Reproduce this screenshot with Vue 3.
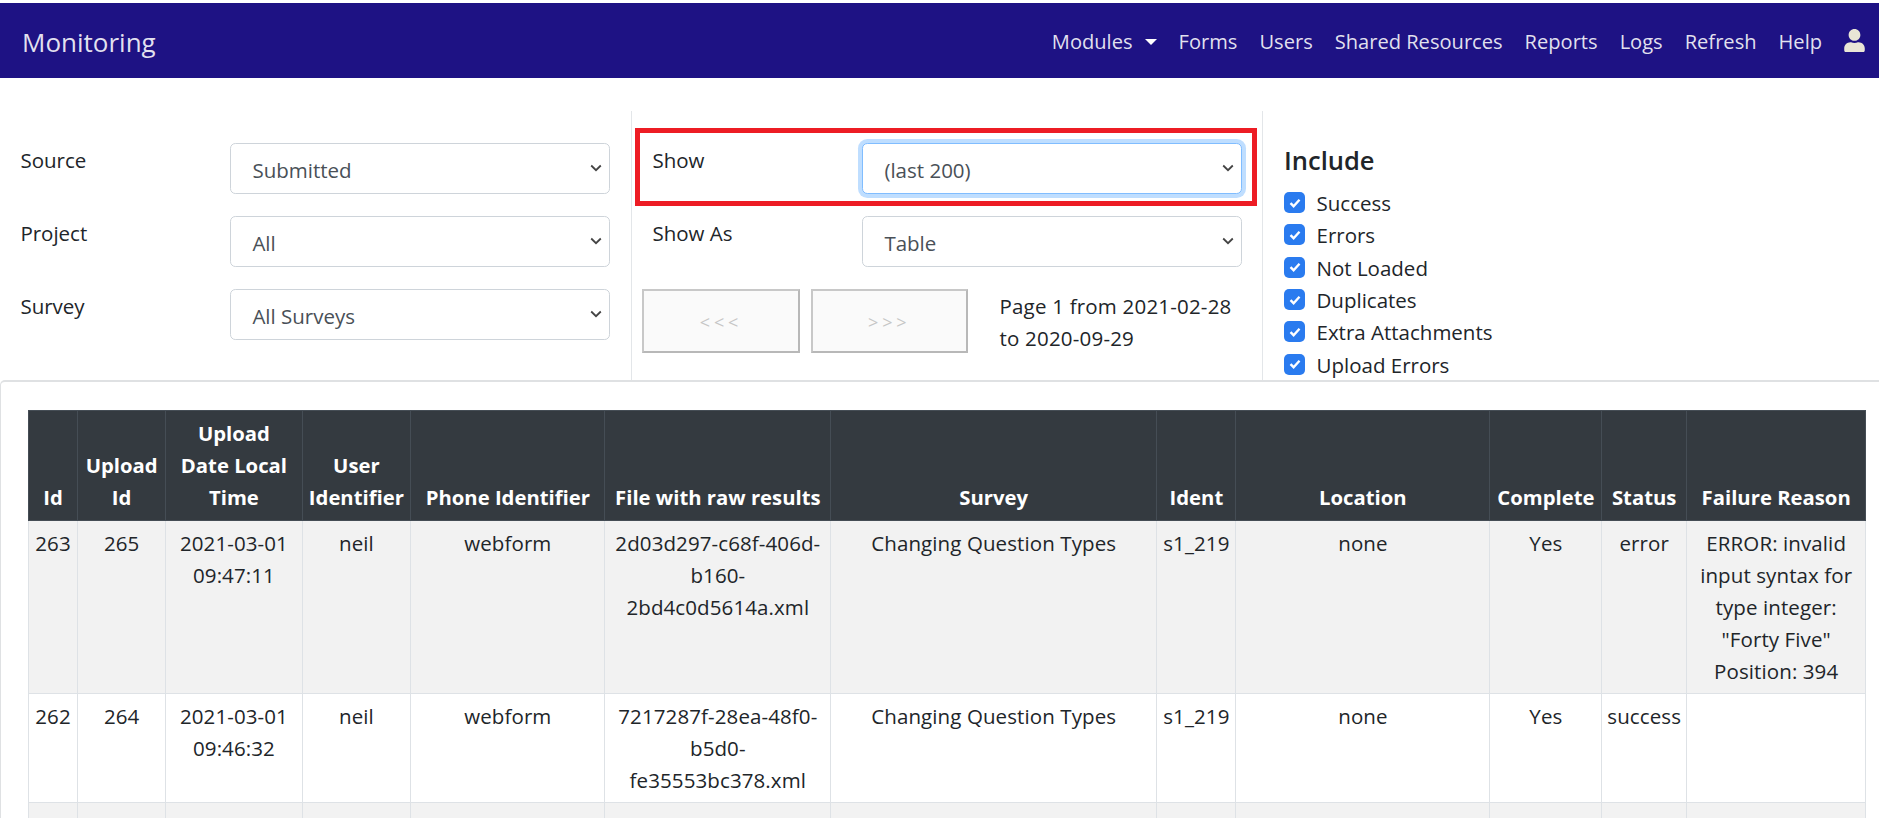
<template>
  <div class="page">
    <!-- Top bar -->
    <nav class="navbar">
      <span class="brand">Monitoring</span>
      <div class="nav-links">
        <a class="nav-link">Modules <i class="caret"></i></a>
        <a v-for="link in navLinks" :key="link" class="nav-link">{{ link }}</a>
        <a class="nav-link">
          <svg class="user-icon" viewBox="0 0 448 512" aria-hidden="true">
            <path d="M224 256c70.7 0 128-57.3 128-128S294.7 0 224 0 96 57.3 96 128s57.3 128 128 128zm89.6 32h-16.7c-22.2 10.2-46.9 16-72.9 16s-50.6-5.8-72.9-16h-16.7C60.2 288 0 348.2 0 422.4V464c0 26.5 21.5 48 48 48h352c26.5 0 48-21.5 48-48v-41.6c0-74.2-60.2-134.4-134.4-134.4z" />
          </svg>
        </a>
      </div>
    </nav>

    <!-- Filters -->
    <section class="filters">
      <div class="filter-col">
        <div v-for="f in leftFilters" :key="f.label" class="form-row">
          <label class="form-label">{{ f.label }}</label>
          <select class="form-select">
            <option>{{ f.value }}</option>
          </select>
        </div>
      </div>

      <div class="filter-col middle">
        <div class="form-row marked">
          <label class="form-label">Show</label>
          <select class="form-select focused">
            <option>(last 200)</option>
          </select>
          <span class="red-box"></span>
        </div>
        <div class="form-row">
          <label class="form-label">Show As</label>
          <select class="form-select">
            <option>Table</option>
          </select>
        </div>
        <div class="pager">
          <button class="page-btn" disabled>&lt;&lt;&lt;</button>
          <button class="page-btn narrow" disabled>&gt;&gt;&gt;</button>
          <div class="page-info">Page 1 from 2021-02-28<br />to 2020-09-29</div>
        </div>
      </div>

      <div class="filter-col last">
        <h5 class="include-title">Include</h5>
        <label v-for="c in includes" :key="c" class="check-row">
          <input type="checkbox" checked />
          <span>{{ c }}</span>
        </label>
      </div>
    </section>

    <!-- Results -->
    <section class="card">
      <table class="results">
        <colgroup>
          <col v-for="col in columns" :key="col.label" :style="{ width: col.width + 'px' }" />
        </colgroup>
        <thead>
          <tr>
            <th v-for="col in columns" :key="col.label">{{ col.label }}</th>
          </tr>
        </thead>
        <tbody>
          <tr v-for="(row, i) in rows" :key="i">
            <td v-for="(cell, j) in row" :key="j">{{ cell }}</td>
          </tr>
        </tbody>
      </table>
    </section>
  </div>
</template>

<script setup>
const navLinks = ['Forms', 'Users', 'Shared Resources', 'Reports', 'Logs', 'Refresh', 'Help']

const leftFilters = [
  { label: 'Source', value: 'Submitted' },
  { label: 'Project', value: 'All' },
  { label: 'Survey', value: 'All Surveys' },
]

const includes = ['Success', 'Errors', 'Not Loaded', 'Duplicates', 'Extra Attachments', 'Upload Errors']

const columns = [
  { label: 'Id', width: 49 },
  { label: 'Upload\nId', width: 88.3 },
  { label: 'Upload\nDate Local\nTime', width: 136.3 },
  { label: 'User\nIdentifier', width: 108.6 },
  { label: 'Phone Identifier', width: 194.3 },
  { label: 'File with raw results', width: 225.7 },
  { label: 'Survey', width: 326.1 },
  { label: 'Ident', width: 79.2 },
  { label: 'Location', width: 253.9 },
  { label: 'Complete', width: 112.1 },
  { label: 'Status', width: 84.5 },
  { label: 'Failure Reason', width: 179.5 },
]

const rows = [
  ['263', '265', '2021-03-01\n09:47:11', 'neil', 'webform', '2d03d297-c68f-406d-\nb160-\n2bd4c0d5614a.xml', 'Changing Question Types', 's1_219', 'none', 'Yes', 'error', 'ERROR: invalid\ninput syntax for\ntype integer:\n"Forty Five"\nPosition: 394'],
  ['262', '264', '2021-03-01\n09:46:32', 'neil', 'webform', '7217287f-28ea-48f0-\nb5d0-\nfe35553bc378.xml', 'Changing Question Types', 's1_219', 'none', 'Yes', 'success', ''],
  ['', '', '', 'neil', 'webform', '', 'Changing Question Types', 's1_219', 'none', 'Yes', '', ''],
]
</script>

<style>
html, body {
  margin: 0;
  background: #fff;
}
</style>

<style scoped>
.page {
  height: 818px;
  overflow: hidden;
  padding-top: 3px;
  box-sizing: border-box;
  font-family: "Open Sans", "Noto Sans", sans-serif;
  font-size: 20.5px;
  line-height: 32px;
  color: #212529;
  background: #fff;
}

/* top bar */
.navbar {
  display: flex;
  align-items: center;
  justify-content: space-between;
  height: 75px;
  padding: 2px 14px 0 22px;
  box-sizing: border-box;
  background: #1e1284;
  color: rgba(255, 255, 255, 0.88);
}
.brand {
  font-size: 26px;
}
.nav-links {
  display: flex;
  align-items: center;
  gap: 22px;
  font-size: 20.1px;
}
.nav-link {
  display: flex;
  align-items: center;
  gap: 12px;
}
.caret {
  width: 0;
  height: 0;
  border-left: 6.5px solid transparent;
  border-right: 6.5px solid transparent;
  border-top: 6.5px solid #fff;
}
.user-icon {
  display: block;
  width: 21px;
  height: 23.5px;
  fill: #e9e6d6;
  margin-top: -2px;
}

/* filters */
.filters {
  display: grid;
  grid-template-columns: 632px 631px 1fr;
  height: 269px;
  margin-top: 33px;
}
.filter-col {
  display: flex;
  flex-direction: column;
  gap: 22.3px;
  padding: 32px 21.5px 0 20.4px;
  border-right: 1px solid #e3e6e9;
  box-sizing: border-box;
  min-width: 0;
}
.filter-col.middle {
  padding-right: 20.4px;
}
.filter-col.last {
  gap: 0;
  padding: 33px 0 0 21px;
  border-right: none;
}
.form-row {
  position: relative;
  display: grid;
  grid-template-columns: 210px 1fr;
  height: 50.67px;
}
.form-label {
  line-height: 32px;
  padding-top: 1px;
}
.form-select {
  display: block;
  width: 100%;
  height: 50.67px;
  padding: 3px 36px 0 21px;
  border: 1px solid #ced4da;
  border-radius: 5.33px;
  box-sizing: border-box;
  font: inherit;
  color: #495057;
  background: #fff url("data:image/svg+xml,%3Csvg xmlns='http://www.w3.org/2000/svg' width='12' height='8' viewBox='0 0 12 8'%3E%3Cpath d='M1.2 1.5 6 6.2l4.8-4.7' fill='none' stroke='%23444' stroke-width='1.8'/%3E%3C/svg%3E") no-repeat right 7px center;
  appearance: none;
  outline: none;
}
.form-select.focused {
  border-color: #80bdff;
  box-shadow: 0 0 0 4px rgba(0, 123, 255, 0.25);
}
.red-box {
  position: absolute;
  top: -15.3px;
  right: -15.2px;
  bottom: -12.3px;
  left: -17.4px;
  border: 5px solid #ed1c24;
  pointer-events: none;
}
.pager {
  display: flex;
  align-items: flex-start;
  margin-left: -10.4px;
}
.page-btn {
  width: 158px;
  height: 63.6px;
  padding: 3px 0 0;
  margin-right: 11px;
  border: 2px solid #c8c8c8;
  border-right-color: #b8b8b8;
  border-bottom-color: #b8b8b8;
  background: #fafafa;
  font: inherit;
  font-size: 18px;
  letter-spacing: 3.8px;
  color: #c6c6c6;
}
.page-btn.narrow {
  width: 156.5px;
  margin-right: 32px;
}
.page-info {
  padding-top: 1px;
  white-space: nowrap;
  letter-spacing: 0.2px;
}

.include-title {
  margin: 0 0 10.5px;
  font-size: 25.5px;
  line-height: 32px;
  font-weight: 600;
}
.check-row {
  display: flex;
  align-items: center;
  gap: 11.5px;
  height: 32.3px;
}
.check-row span {
  padding-top: 1px;
}
.check-row input {
  appearance: none;
  flex: none;
  width: 21px;
  height: 21px;
  margin: 0;
  border-radius: 5px;
  background: #2a7bef url("data:image/svg+xml,%3Csvg xmlns='http://www.w3.org/2000/svg' width='12' height='10' viewBox='0 0 12 10'%3E%3Cpath d='M1.5 5.2 4.6 8.2 10.5 1.8' fill='none' stroke='%23fff' stroke-width='2.4'/%3E%3C/svg%3E") no-repeat center;
}

/* results table */
.card {
  padding: 28px 13.5px 0 27px;
  border-top: 2px solid #dfe1e3;
  border-left: 1px solid #dfe1e3;
  border-top-left-radius: 5px;
  box-sizing: border-box;
}
.results {
  table-layout: fixed;
  width: 1837.6px;
  border-collapse: collapse;
  text-align: center;
}
.results th,
.results td {
  padding: 5.6px 0 6.4px;
  white-space: pre-line;
  vertical-align: top;
  letter-spacing: 0.1px;
}
.results th {
  padding: 6px 0 7.4px;
  vertical-align: bottom;
  font-size: 20.3px;
  font-weight: 700;
  letter-spacing: 0;
  color: #fff;
  background: #343a40;
  border: 1px solid #454d55;
}
.results td {
  border: 1px solid #dee2e6;
}
.results tbody tr:nth-child(odd) td {
  background: #f2f2f2;
}
</style>
